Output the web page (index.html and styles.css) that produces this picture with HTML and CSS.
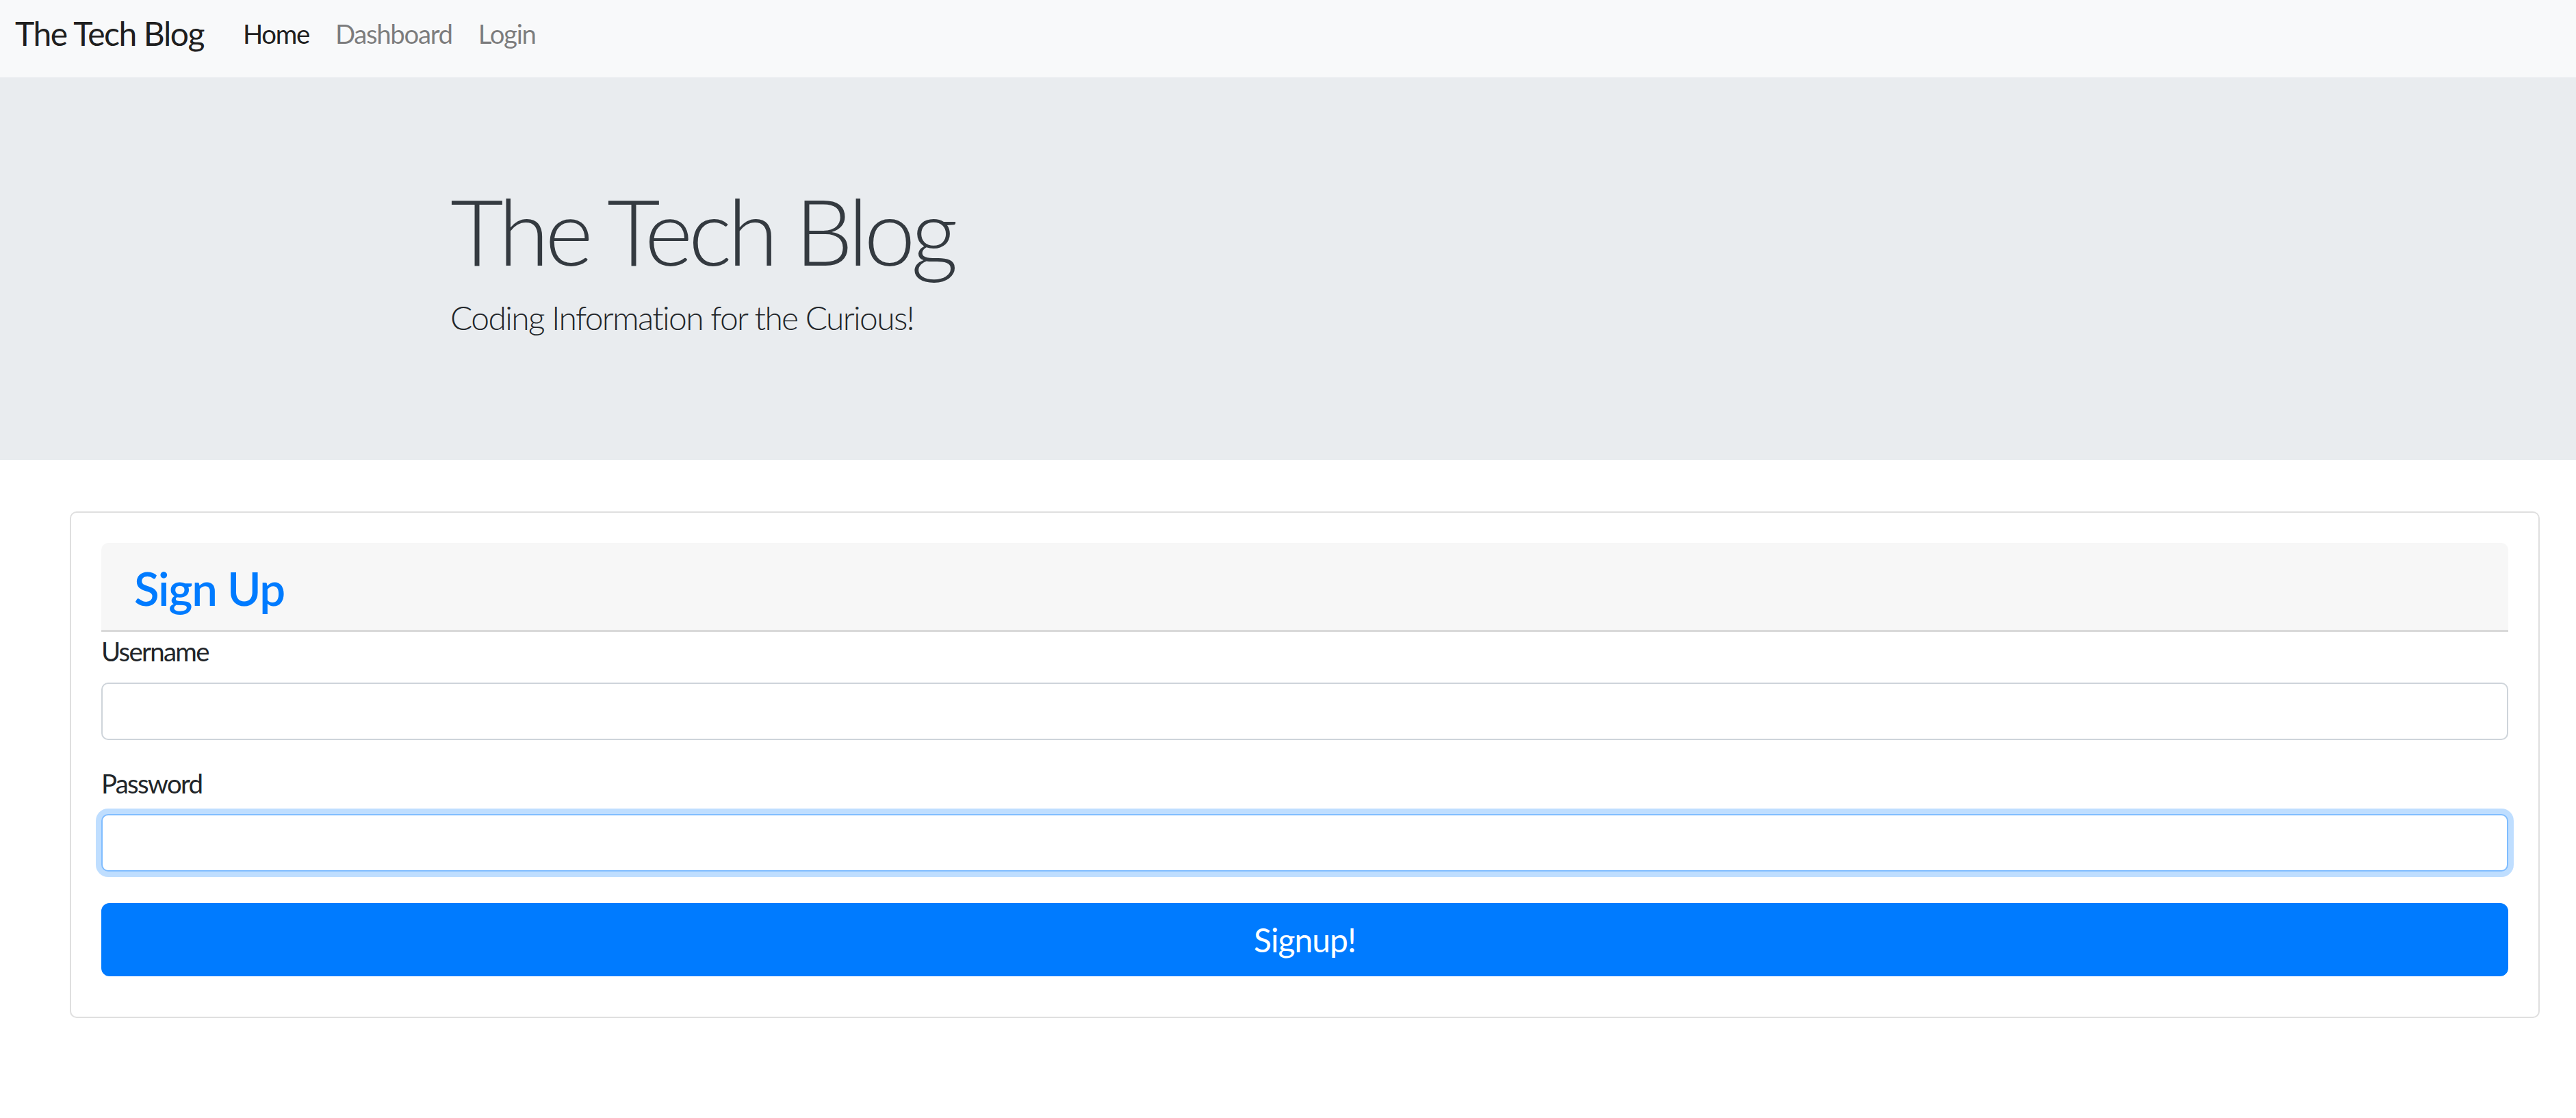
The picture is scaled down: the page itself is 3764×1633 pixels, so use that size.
FILE: index.html
```html
<!DOCTYPE html>
<html lang="en">
<head>
<meta charset="utf-8">
<title>The Tech Blog</title>
<link rel="stylesheet" href="styles.css">
</head>
<body>
<nav class="navbar">
  <a class="brand" href="#">The Tech Blog</a>
  <ul class="nav">
    <li><a class="nav-link active" href="#">Home</a></li>
    <li><a class="nav-link" href="#">Dashboard</a></li>
    <li><a class="nav-link" href="#">Login</a></li>
  </ul>
</nav>
<header class="jumbotron">
  <div class="container">
    <h1 class="display">The Tech Blog</h1>
    <p class="lead">Coding Information for the Curious!</p>
  </div>
</header>
<main class="main">
  <section class="card">
    <div class="card-header">
      <h3 class="card-title">Sign Up</h3>
    </div>
    <form class="form">
      <div class="form-group">
        <label class="form-label" for="username">Username</label>
        <input class="form-control" id="username" type="text">
      </div>
      <div class="form-group">
        <label class="form-label" for="password">Password</label>
        <input class="form-control is-focused" id="password" type="password">
      </div>
      <button class="btn-primary" type="button">Signup!</button>
    </form>
  </section>
</main>
</body>
</html>
```
FILE: styles.css
```css
* {
  box-sizing: border-box;
}

html,
body {
  margin: 0;
  padding: 0;
}

body {
  font-family: Lato, "Open Sans", sans-serif;
  font-size: 38.4px;
  line-height: 1.5;
  letter-spacing: -0.035em;
  color: #212529;
  background: #ffffff;
}

/* Navbar */
.navbar {
  height: 113px;
  background: #f8f9fa;
  display: flex;
  align-items: flex-start;
  padding: 13px 22px 0;
}

.brand {
  font-size: 48px;
  line-height: 72px;
  letter-spacing: -0.03em;
  color: rgba(0, 0, 0, 0.9);
  text-decoration: none;
  margin-right: 38px;
  white-space: nowrap;
}

.nav {
  list-style: none;
  margin: 8px 0 0;
  padding: 0;
  display: flex;
}

.nav-link {
  display: block;
  padding: 0 19px;
  font-size: 38.4px;
  line-height: 57.6px;
  color: rgba(0, 0, 0, 0.5);
  text-decoration: none;
}

.nav-link.active {
  color: rgba(0, 0, 0, 0.9);
}

/* Jumbotron */
.jumbotron {
  background: #e9ecef;
  padding: 143px 0 172px;
  margin-bottom: 75px;
}

.container {
  max-width: 2520px;
  margin: 0 auto;
  padding: 0 36px;
}

.display {
  margin: 0 0 11px;
  font-size: 134.4px;
  font-weight: 300;
  line-height: 1.2;
  letter-spacing: -0.045em;
  color: #343a40;
}

.lead {
  margin: 0;
  font-size: 48px;
  font-weight: 300;
  line-height: 72px;
  letter-spacing: -0.035em;
  color: #212529;
}

/* Card */
.main {
  padding: 0 53px 0 102px;
}

.card {
  border: 2px solid #dfdfdf;
  border-radius: 10px;
  padding: 44px 44px 59px;
  background: #ffffff;
}

.card-header {
  background: #f7f7f7;
  border-bottom: 3px solid #d9d9d9;
  border-radius: 10px 10px 0 0;
  padding: 26px 48px 20px;
}

.card-title {
  margin: 0;
  font-size: 67.2px;
  font-weight: 600;
  line-height: 1.2;
  letter-spacing: -0.02em;
  color: #007bff;
}

.form {
  display: flex;
  flex-direction: column;
}

.form-group {
  margin-bottom: 35px;
}

.form-group + .form-group {
  margin-bottom: 46px;
}

.form-label {
  display: block;
  margin-bottom: 16px;
  font-size: 38.4px;
  line-height: 57.6px;
  letter-spacing: -0.045em;
}

.form-control {
  display: block;
  width: 100%;
  height: 84px;
  padding: 14px 29px;
  font-family: inherit;
  font-size: 38.4px;
  color: #495057;
  background: #ffffff;
  border: 2px solid #ced4da;
  border-radius: 10px;
  outline: none;
}

.form-control.is-focused {
  border-color: #80bdff;
  box-shadow: 0 0 0 8px rgba(0, 123, 255, 0.25);
}

.btn-primary {
  display: block;
  width: 100%;
  height: 107px;
  font-family: inherit;
  font-size: 48px;
  line-height: 72px;
  letter-spacing: -0.02em;
  color: #ffffff;
  background: #007bff;
  border: 2px solid #007bff;
  border-radius: 12px;
  cursor: pointer;
}
```
